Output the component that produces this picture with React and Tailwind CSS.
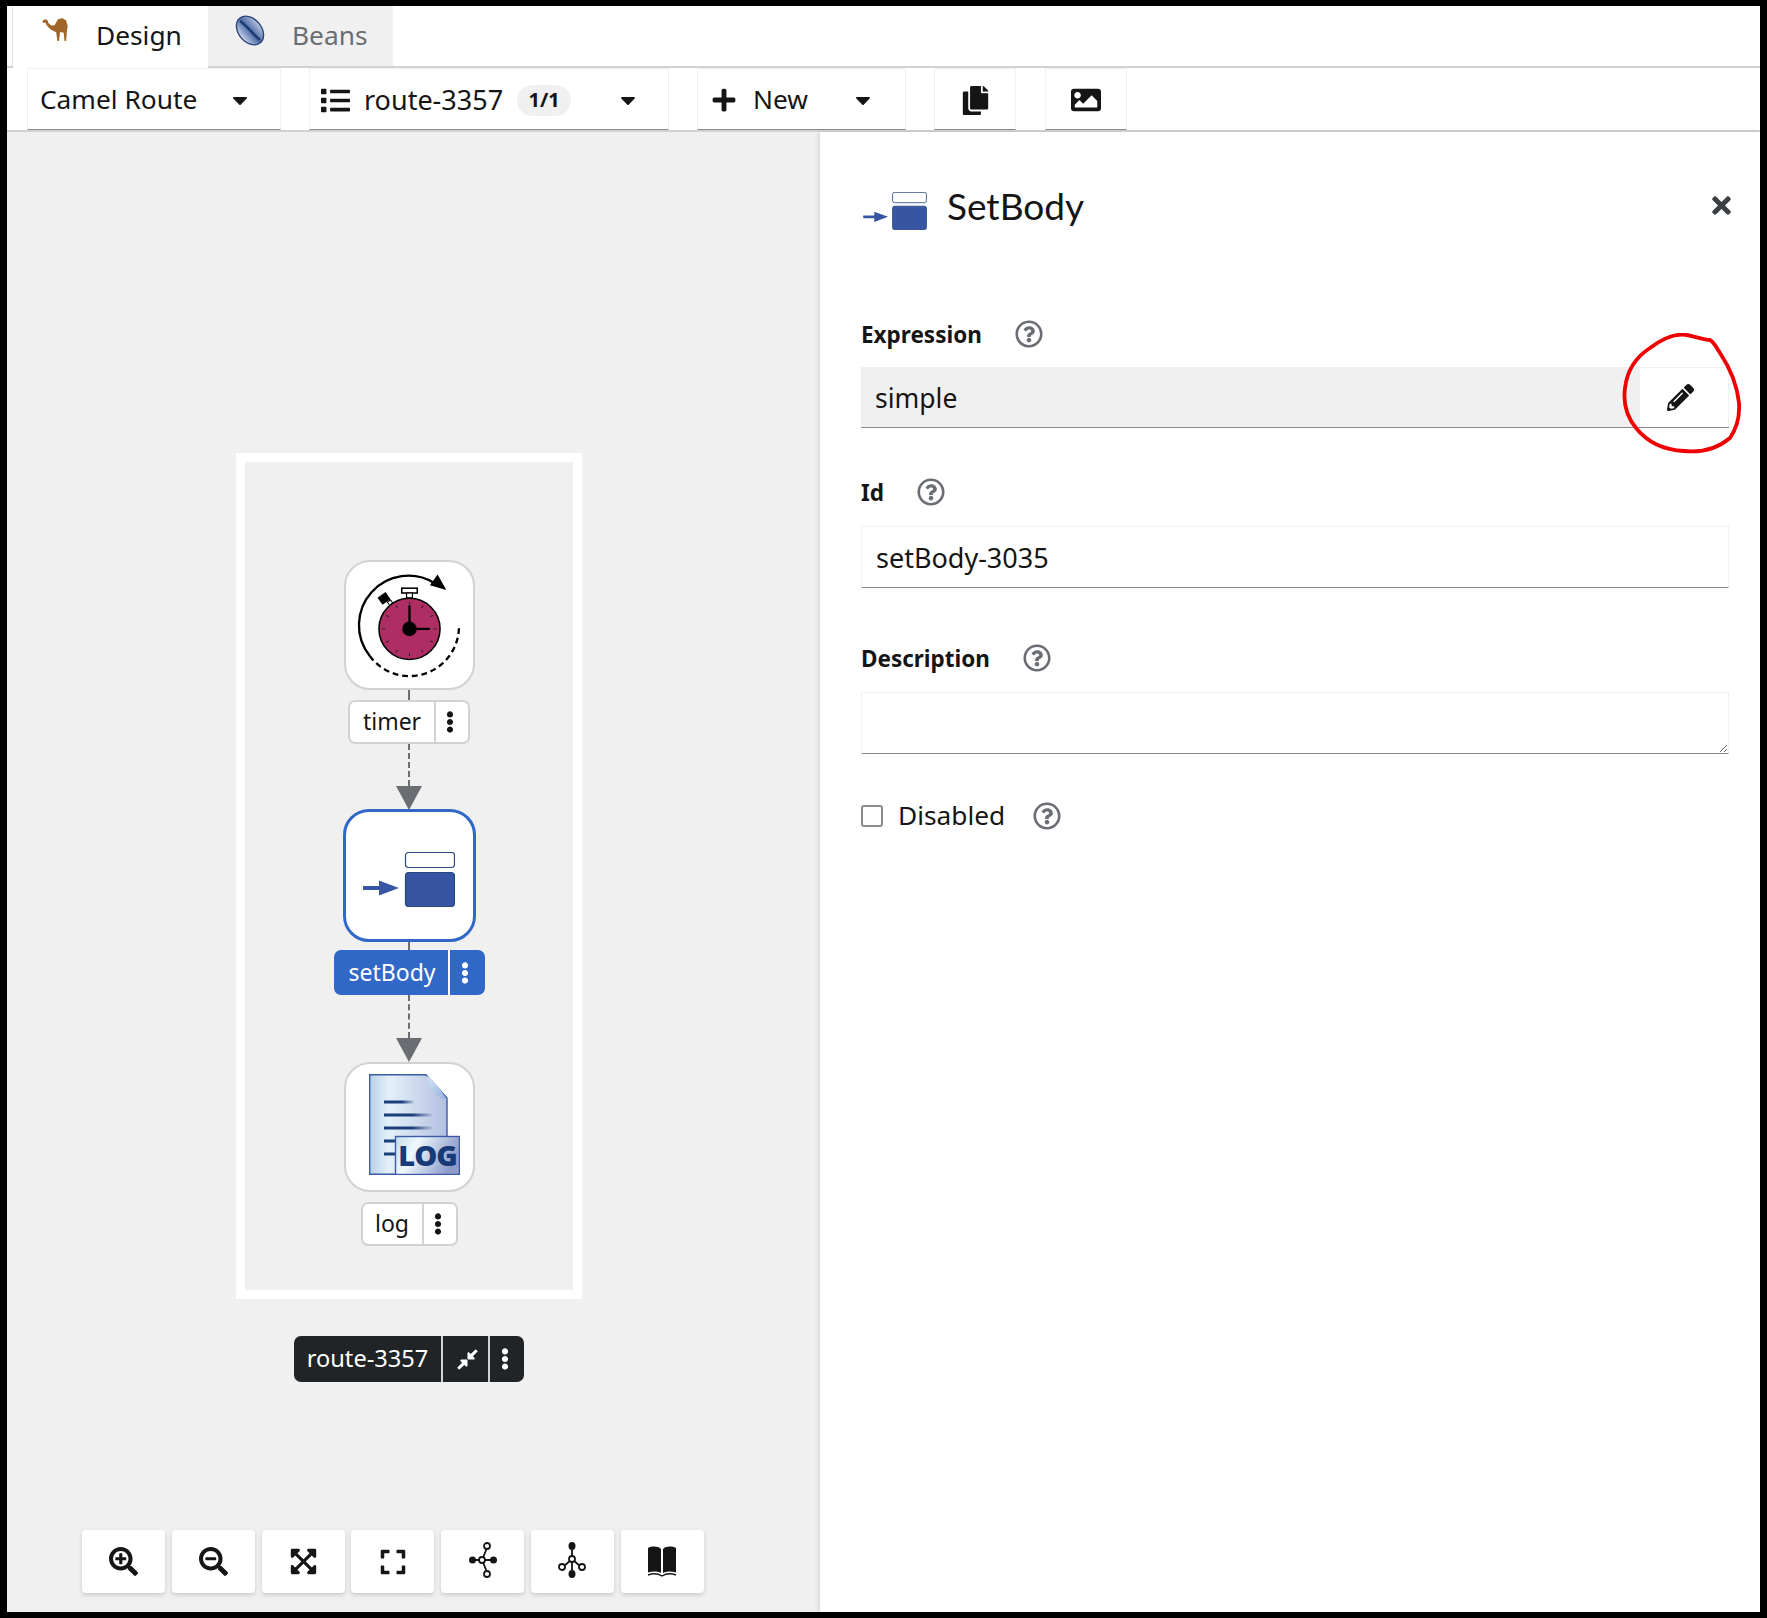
import { FaCaretDown, FaList, FaPlus, FaCopy, FaImage, FaTimes, FaPencilAlt, FaRegQuestionCircle, FaSearchPlus, FaSearchMinus, FaExpandArrowsAlt, FaExpand, FaCompressAlt, FaEllipsisV } from 'react-icons/fa'

function Camel() {
  return (
    <svg viewBox="0 0 64 58" className="w-[26px] h-[23px]">
      <path fill="#a0662a" d="M0 8 L6 3 L13 5 L15 12 L22 19 L31 18 L39 4 L50 0 L60 6 L64 20 L62 34 L60 58 L56 58 L54 37 L45 35 L42 58 L38 58 L35 36 L23 30 L12 20 L8 12 L2 12 Z" />
    </svg>
  )
}

function Bean() {
  return (
    <svg viewBox="0 0 30 33" className="w-[30px] h-[33px]">
      <defs>
        <linearGradient id="bean" x1="0" y1="0" x2="1" y2="0">
          <stop offset="0" stopColor="#c9d6ea" />
          <stop offset="0.5" stopColor="#4c6aa6" />
          <stop offset="1" stopColor="#b7c6e0" />
        </linearGradient>
      </defs>
      <ellipse cx="15" cy="16.5" rx="11.5" ry="16" transform="rotate(-40 15 16.5)" fill="url(#bean)" stroke="#2b4478" strokeWidth="1.4" />
      <path d="M5 7 C12 12 18 20 25 26" stroke="#1f3a70" strokeWidth="2.4" fill="none" />
    </svg>
  )
}

function SetBodyIcon({ className }) {
  return (
    <svg viewBox="0 0 92 55" className={className}>
      <rect x="42.5" y="0.5" width="49" height="15" rx="3" fill="#fff" stroke="#24497f" strokeWidth="1.2" />
      <rect x="42.5" y="20.5" width="49" height="34" rx="3" fill="#3755a3" stroke="#24497f" strokeWidth="1.2" />
      <path d="M0 34 H16 V28.5 L36 36 L16 43.5 V38 H0 Z" fill="#3755a3" />
    </svg>
  )
}

function TimerIcon() {
  const ticks = [0, 30, 60, 90, 120, 150, 180, 210, 240, 270, 300, 330]
  return (
    <svg viewBox="0 0 130 130" className="w-full h-full">
      <path d="M24 97 A51 51 0 0 1 91 22" fill="none" stroke="#000" strokeWidth="2.4" />
      <path d="M94 13 L103 29 L86 24 Z" fill="#000" />
      <path d="M24 97 A51 51 0 0 0 116 65" fill="none" stroke="#000" strokeWidth="2.4" strokeDasharray="6 4" />
      <rect x="57" y="27" width="16" height="5" fill="#fff" stroke="#000" strokeWidth="1.6" />
      <rect x="62" y="32" width="6" height="5" fill="#fff" stroke="#000" strokeWidth="1.2" />
      <rect x="34" y="33" width="10" height="9" transform="rotate(-35 39 38)" fill="#000" />
      <rect x="43" y="40" width="4" height="4" transform="rotate(-35 45 42)" fill="#fff" stroke="#000" />
      <circle cx="65" cy="69" r="31.5" fill="#ae2d63" stroke="#000" strokeWidth="1.6" />
      {ticks.map((a) => (
        <line key={a} x1="65" y1="41" x2="65" y2="44" stroke="#222" strokeWidth="1" transform={`rotate(${a} 65 69)`} />
      ))}
      <path d="M65 69 V45 M65 69 H86" stroke="#000" strokeWidth="2.4" />
      <circle cx="65" cy="69" r="7.5" fill="#000" />
    </svg>
  )
}

function LogIcon() {
  return (
    <svg viewBox="0 0 91 101" className="w-[91px] h-[101px] ml-[11px] -mt-[5px]">
      <defs>
        <linearGradient id="doc" x1="0" y1="0" x2="1" y2="0">
          <stop offset="0" stopColor="#b7d0e6" />
          <stop offset="0.25" stopColor="#e4f1f9" />
          <stop offset="1" stopColor="#b3bfe0" />
        </linearGradient>
        <linearGradient id="tag" x1="0" y1="0" x2="1" y2="0.3">
          <stop offset="0" stopColor="#c5daec" />
          <stop offset="0.35" stopColor="#eff8fd" />
          <stop offset="1" stopColor="#8d9ccb" />
        </linearGradient>
        <linearGradient id="fold" x1="0" y1="0" x2="1" y2="1">
          <stop offset="0" stopColor="#d7e5f6" />
          <stop offset="1" stopColor="#8fb0dc" />
        </linearGradient>
        <linearGradient id="line" x1="0" y1="0" x2="1" y2="0">
          <stop offset="0.6" stopColor="#1c3f7c" />
          <stop offset="1" stopColor="#1c3f7c" stopOpacity="0.1" />
        </linearGradient>
      </defs>
      <path d="M0.7 0.7 H57 L78 24 V100.3 H0.7 Z" fill="url(#doc)" stroke="#3b5ba5" strokeWidth="1.4" />
      <path d="M58 1 C60 14 64 22 78 26 C72 16 66 8 58 1 Z" fill="url(#fold)" />
      <rect x="15" y="26.5" width="30" height="3" fill="url(#line)" />
      <rect x="15" y="39.5" width="48" height="3" fill="url(#line)" />
      <rect x="15" y="52.5" width="48" height="3" fill="url(#line)" />
      <rect x="15" y="65.5" width="12" height="3" fill="#1c3f7c" />
      <rect x="15" y="78.5" width="12" height="3" fill="#1c3f7c" />
      <rect x="26.5" y="62.5" width="64" height="38" fill="url(#tag)" stroke="#3b5ba5" strokeWidth="1.4" />
      <text x="58.5" y="92" textAnchor="middle" fontSize="29" fontWeight="800" letterSpacing="-1" fill="#173a78" fontFamily="'Open Sans', sans-serif">LOG</text>
    </svg>
  )
}

function TopologyH() {
  return (
    <svg viewBox="0 0 28 36" className="w-[28px] h-[36px] -mt-[4px]" fill="none" stroke="#151515" strokeWidth="1.8">
      <path d="M4 18 H24 M13 18 L18 6 M13 18 L18 30" />
      <circle cx="3.5" cy="18" r="3.5" fill="#151515" stroke="none" />
      <circle cx="24.5" cy="18" r="3.5" fill="#151515" stroke="none" />
      <circle cx="13" cy="18" r="3" fill="#fff" />
      <circle cx="18" cy="4" r="3" fill="#fff" />
      <circle cx="18" cy="32" r="3" fill="#fff" />
    </svg>
  )
}

function TopologyV() {
  return (
    <svg viewBox="0 0 28 36" className="w-[28px] h-[36px] -mt-[4px]" fill="none" stroke="#151515" strokeWidth="1.8">
      <path d="M14 4 V32 M14 17 L5 25 M14 17 L23 25" />
      <ellipse cx="14" cy="4" rx="3.5" ry="4" fill="#151515" stroke="none" />
      <ellipse cx="14" cy="32" rx="3.5" ry="4" fill="#151515" stroke="none" />
      <circle cx="14" cy="17" r="3" fill="#fff" />
      <circle cx="4" cy="25" r="3" fill="#fff" />
      <circle cx="24" cy="25" r="3" fill="#fff" />
    </svg>
  )
}

function Book() {
  return (
    <svg viewBox="0 0 28 32" className="w-[28px] h-[32px]" fill="#151515">
      <path d="M0 2 C4 0 10 0 13 3 V27 C10 25 4 25 0 26.5 Z" />
      <path d="M28 2 C24 0 18 0 15 3 V27 C18 25 24 25 28 26.5 Z" />
      <path d="M0 29 C4 27.5 10 27.5 14 30 C18 27.5 24 27.5 28 29" fill="none" stroke="#151515" strokeWidth="1.4" />
    </svg>
  )
}

function Connector({ className }) {
  return <div className={`w-0 border-l-2 border-dashed border-[#6a6e73] ${className}`} />
}

function Arrow() {
  return <div className="w-0 h-0 border-x-[13px] border-x-transparent border-t-[24px] border-t-[#6a6e73]" />
}

function NodeLabel({ text, textW, kebabW }) {
  return (
    <div className="flex h-[44px] bg-white border-2 border-[#d2d2d2] rounded-[7px] text-[23px] text-[#151515]">
      <div className={`flex items-center justify-center border-r-2 border-[#d2d2d2] pb-[2px] ${textW}`}>{text}</div>
      <div className={`flex items-center justify-center pr-[4px] ${kebabW}`}>
        <FaEllipsisV size={22} />
      </div>
    </div>
  )
}

function ToolbarItem({ className, children }) {
  return (
    <div className={`flex items-center h-[62px] pt-[2px] border-x border-t border-[#f0f0f0] border-b border-b-[#8a8d90] ${className}`}>
      {children}
    </div>
  )
}

function Help() {
  return <FaRegQuestionCircle size={28} className="text-[#6a6e73]" />
}

function FieldLabel({ text, gap }) {
  return (
    <div className={`flex items-center h-[28px] ${gap}`}>
      <span className="text-[22.5px] font-bold text-[#151515] pt-[2px]">{text}</span>
      <Help />
    </div>
  )
}

const zoomButtons = [
  <FaSearchPlus size={29} />,
  <FaSearchMinus size={29} />,
  <FaExpandArrowsAlt size={29} />,
  <FaExpand size={28} />,
  <TopologyH />,
  <TopologyV />,
  <Book />,
]

export default function App() {
  return (
    <div className="w-[1767px] h-[1618px] border-t-[6px] border-b-[6px] border-x-[7px] border-black bg-white flex flex-col font-['Noto_Sans',sans-serif] text-[#151515] overflow-hidden">
      {/* Tabs */}
      <div className="flex h-[62px] border-b-2 border-[#d2d2d2] shrink-0 text-[26.3px]">
        <div className="w-[6px] border-r border-[#e4e4e4]" />
        <div className="flex items-start w-[195px] h-[62px] bg-white relative pl-[29px] pt-[12px]">
          <Camel />
          <span className="ml-[28px] leading-[38px] -mt-[2px]">Design</span>
        </div>
        <div className="flex items-start w-[185px] bg-[#f0f0f0] pl-[27px] pt-[8px] text-[#6a6e73]">
          <Bean />
          <span className="ml-[27px] leading-[40px] mt-[1px]">Beans</span>
        </div>
      </div>

      {/* Toolbar */}
      <div className="flex h-[64px] pl-[20px] border-b-2 border-[#d2d2d2] shrink-0 text-[26.3px]">
        <ToolbarItem className="w-[254px] pl-[12px] pr-[28px] justify-between">
          <span>Camel Route</span>
          <FaCaretDown size={24} />
        </ToolbarItem>
        <ToolbarItem className="w-[360px] ml-[28px] pl-[11px] pr-[28px]">
          <FaList size={29} />
          <span className="ml-[14px] text-[27px]">route-3357</span>
          <span className="ml-[14px] w-[54px] h-[31px] rounded-full bg-[#f0f0f0] flex items-center justify-center text-[20px] font-bold">1/1</span>
          <FaCaretDown size={24} className="ml-auto" />
        </ToolbarItem>
        <ToolbarItem className="w-[209px] ml-[28px] pl-[13px] pr-[30px]">
          <FaPlus size={26} />
          <span className="ml-[16px]">New</span>
          <FaCaretDown size={24} className="ml-auto" />
        </ToolbarItem>
        <ToolbarItem className="w-[82px] ml-[28px] justify-center">
          <FaCopy size={29} />
        </ToolbarItem>
        <ToolbarItem className="w-[82px] ml-[29px] justify-center">
          <FaImage size={30} />
        </ToolbarItem>
      </div>

      <div className="flex flex-1 min-h-0">
        {/* Canvas */}
        <div className="w-[813px] bg-[#f0f0f0] flex flex-col pt-[321px] pb-[19px] pl-[75px]">
          <div className="ml-[155px] w-[346px] h-[846px] border-[9px] border-white flex flex-col items-center pt-[98px] -translate-x-[1px]">
            <div className="w-[131px] h-[130px] bg-white border-2 border-[#d2d2d2] rounded-[26px] overflow-hidden shrink-0">
              <TimerIcon />
            </div>
            <Connector className="h-[10px]" />
            <NodeLabel text="timer" textW="w-[86px]" kebabW="w-[32px]" />
            <Connector className="h-[42px]" />
            <Arrow />
            <div className="w-[133px] h-[133px] bg-white border-[3px] border-[#3168c8] rounded-[26px] flex items-center justify-center shrink-0 -mt-[1px]">
              <SetBodyIcon className="w-[92px] h-[55px] mt-[7px]" />
            </div>
            <Connector className="h-[8px]" />
            <div className="flex h-[45px] bg-[#3168c8] rounded-[7px] text-[23px] text-white w-[151px]">
              <div className="flex items-center justify-center border-r-2 border-white w-[116px] pb-[1px] pl-[3px]">setBody</div>
              <div className="flex items-center justify-center flex-1 pr-[4px]">
                <FaEllipsisV size={22} />
              </div>
            </div>
            <Connector className="h-[43px]" />
            <Arrow />
            <div className="w-[131px] h-[130px] bg-white border-2 border-[#d2d2d2] rounded-[26px] flex items-center justify-center shrink-0">
              <LogIcon />
            </div>
            <div className="mt-[10px]">
              <NodeLabel text="log" textW="w-[61px]" kebabW="w-[32px]" />
            </div>
          </div>
          <div className="ml-[212px] mt-[37px] w-[230px] h-[46px] flex bg-[#212427] rounded-[7px] text-white text-[23.6px]">
            <div className="w-[149px] flex items-center justify-center border-r-2 border-[#d2d2d2]">route-3357</div>
            <div className="w-[47px] flex items-center justify-center border-r-2 border-[#d2d2d2] pl-[3px]">
              <FaCompressAlt size={23} />
            </div>
            <div className="flex-1 flex items-center justify-center pr-[4px]">
              <FaEllipsisV size={22} />
            </div>
          </div>
          <div className="mt-auto flex gap-[6.8px]">
            {zoomButtons.map((icon, i) => (
              <div key={i} className="w-[83px] h-[63px] bg-white rounded-[4px] shadow-[0_2px_4px_rgba(0,0,0,0.16)] flex items-center justify-center text-[#151515]">
                {icon}
              </div>
            ))}
          </div>
        </div>

        {/* Side panel */}
        <div className="flex-1 relative bg-white pl-[41px] pr-[31px] shadow-[-2px_0_4px_rgba(0,0,0,0.1)]">
          <div className="flex items-center h-[38px] mt-[60px]">
            <SetBodyIcon className="w-[64px] h-[38px] ml-[2px]" />
            <span className="ml-[20px] text-[37px] font-['Lato',sans-serif] -mt-[10px]">SetBody</span>
            <FaTimes size={27} className="ml-auto -mr-[6px] -mt-[12px] text-[#3c3f42]" />
          </div>

          <div className="mt-[90px]">
            <FieldLabel text="Expression" gap="gap-[33px]" />
          </div>
          <div className="flex mt-[19px] h-[61px] border-b border-[#8a8d90]">
            <input readOnly value="simple" className="flex-1 bg-[#f0f0f0] px-[14px] pt-[3px] text-[26.5px] outline-none" />
            <div className="w-[89px] border-t border-r border-[#f0f0f0] flex items-center justify-center pr-[8px]">
              <FaPencilAlt size={27} />
            </div>
          </div>

          <div className="mt-[50px]">
            <FieldLabel text="Id" gap="gap-[33px]" />
          </div>
          <input readOnly value="setBody-3035" className="block w-full mt-[20px] h-[62px] px-[14px] text-[27px] border border-[#f0f0f0] border-b-[#8a8d90] outline-none" />

          <div className="mt-[56px]">
            <FieldLabel text="Description" gap="gap-[33px]" />
          </div>
          <textarea readOnly className="block w-full mt-[20px] h-[62px] border border-[#f0f0f0] border-b-[#8a8d90] outline-none" />

          <div className="flex items-center mt-[48px] h-[28px]">
            <input type="checkbox" readOnly className="appearance-none w-[22px] h-[22px] bg-white border-2 border-[#8a8d90] rounded-[3px]" />
            <span className="ml-[15px] text-[26.3px]">Disabled</span>
            <span className="ml-[28px]"><Help /></span>
          </div>

          {/* hand drawn annotation */}
          <svg viewBox="0 0 120 125" className="absolute left-[802px] top-[201px] w-[120px] h-[125px]" fill="none" stroke="#f00000" strokeWidth="3.8" strokeLinecap="round" strokeLinejoin="round">
            <path d="M88 7 C82 7 72 3 64 2 C52 0 40 6 28 15 C14 24 5 38 3 55 C1 70 5 84 14 95 C26 110 42 117 62 118 C80 120 96 115 108 105 C115 95 118 85 117 70 C115 50 108 35 98 20 C94 14 92 9 88 7 Z" />
          </svg>
        </div>
      </div>
    </div>
  )
}
